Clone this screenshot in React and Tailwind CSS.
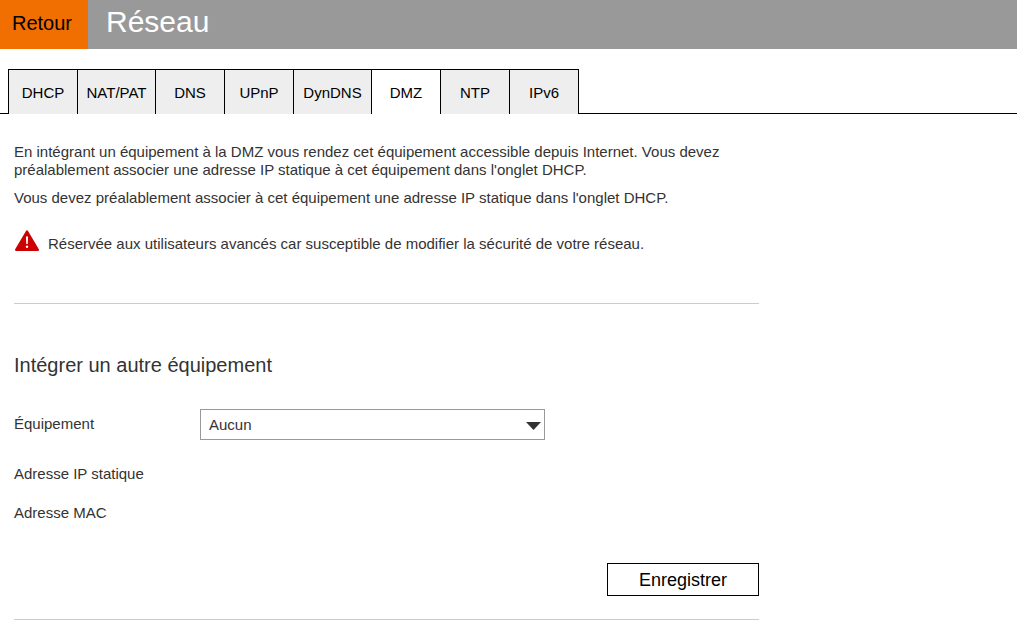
import React from "react";

const tabs = [
  { name: "DHCP", width: "w-[70px]" },
  { name: "NAT/PAT", width: "w-[79px]" },
  { name: "DNS", width: "w-[70px]" },
  { name: "UPnP", width: "w-[70px]" },
  { name: "DynDNS", width: "w-[79px]" },
  { name: "DMZ", width: "w-[70px]", active: true },
  { name: "NTP", width: "w-[70px]" },
  { name: "IPv6", width: "w-[70px]" },
];

function WarningIcon() {
  return (
    <svg className="h-[22px] w-[26px] shrink-0" viewBox="0 0 26 22" aria-hidden="true">
      <path d="M13 1.6 L23.8 19.8 H2.2 Z" fill="#cd0000" stroke="#cd0000" strokeWidth="2.4" strokeLinejoin="round" />
      <path d="M11.9 6.5 h2.2 l-.4 7.5 h-1.4 Z" fill="#fff" />
      <circle cx="13" cy="16.8" r="1.2" fill="#fff" />
    </svg>
  );
}

export default function App() {
  return (
    <div className="min-h-screen bg-white font-['Liberation_Sans',Arial,sans-serif] text-[15px] leading-[18px] text-[#333]">
      <header className="flex h-[49px] bg-[#999]">
        <button type="button" className="w-[88px] bg-[#f16e00] pr-1 pb-1 text-xl text-black">Retour</button>
        <h1 className="pt-1 pl-[18px] text-3xl leading-9 text-white">Réseau</h1>
      </header>
      <nav className="mt-5 flex border-b border-black pl-2">
        {tabs.map((tab) => (
          <button
            key={tab.name}
            type="button"
            className={`-mr-px -mb-px h-[45px] border-x border-t border-black pt-0.5 text-black ${tab.width} ${tab.active ? "bg-white" : "bg-[#eee]"}`}
          >
            {tab.name}
          </button>
        ))}
      </nav>
      <main className="max-w-[773px] px-3.5 pt-[29px]">
        <p>
          En intégrant un équipement à la DMZ vous rendez cet équipement accessible depuis Internet. Vous devez
          préalablement associer une adresse IP statique à cet équipement dans l'onglet DHCP.
        </p>
        <p className="mt-2.5">Vous devez préalablement associer à cet équipement une adresse IP statique dans l'onglet DHCP.</p>
        <div className="mt-[23px] flex items-start gap-2">
          <WarningIcon />
          <p className="pt-[5px]">Réservée aux utilisateurs avancés car susceptible de modifier la sécurité de votre réseau.</p>
        </div>
        <hr className="mt-[50px] border-[#ccc]" />
        <form onSubmit={(e) => e.preventDefault()}>
          <h2 className="mt-[47px] text-xl leading-7">Intégrer un autre équipement</h2>
          <div className="mt-[30px] flex items-center">
            <label htmlFor="device" className="w-[186px] pb-0.5">Équipement</label>
            <div className="relative w-[345px]">
              <select id="device" className="h-[31px] w-full appearance-none border border-[#999] bg-white px-2">
                <option>Aucun</option>
              </select>
              <svg className="pointer-events-none absolute top-[13px] right-1 h-2 w-[15px]" viewBox="0 0 15 8" aria-hidden="true">
                <path d="M0 0 H15 L7.5 8 Z" fill="#333" />
              </svg>
            </div>
          </div>
          <p className="mt-[25px]">Adresse IP statique</p>
          <p className="mt-[21px]">Adresse MAC</p>
          <div className="mt-[41px] flex justify-end">
            <button type="submit" className="h-[33px] w-[152px] border border-black text-lg text-black">Enregistrer</button>
          </div>
        </form>
        <hr className="mt-[23px] border-[#ccc]" />
      </main>
    </div>
  );
}
